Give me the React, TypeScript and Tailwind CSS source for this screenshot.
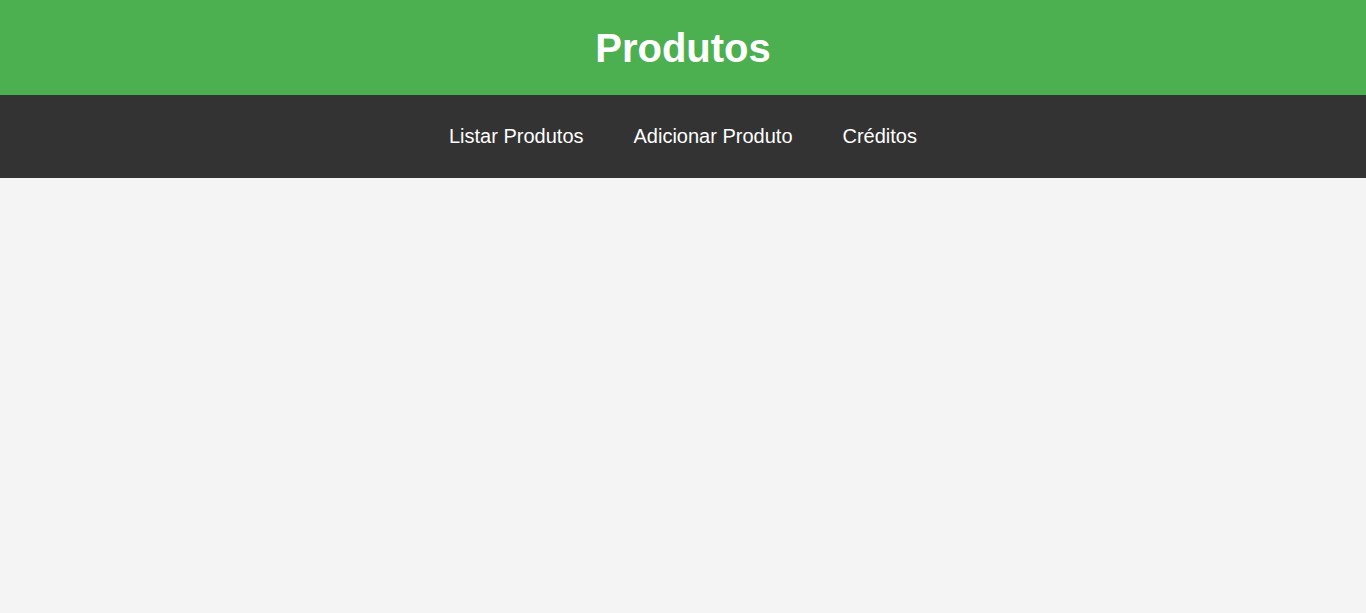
export default function App() {
  return (
    <div className="min-h-screen bg-[#f4f4f4] font-['Liberation_Sans',Arial,sans-serif]">
      <header className="h-[95px] bg-[#4caf50] flex items-center justify-center">
        <h1 className="text-[40px] font-bold text-white leading-none">Produtos</h1>
      </header>
      <nav className="h-[83px] pb-[2px] bg-[#333333] flex items-center justify-center">
        <a href="#" className="mx-[25px] text-[20px] text-white">
          Listar Produtos
        </a>
        <a href="#" className="mx-[25px] text-[20px] text-white">
          Adicionar Produto
        </a>
        <a href="#" className="mx-[25px] text-[20px] text-white">
          Créditos
        </a>
      </nav>
    </div>
  );
}
